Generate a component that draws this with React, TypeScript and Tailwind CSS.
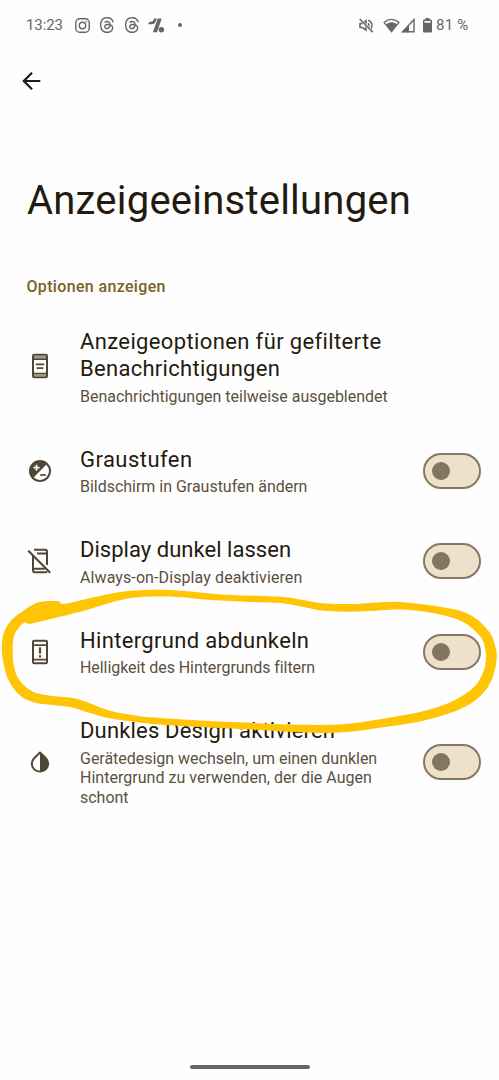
import type { ReactNode } from 'react';
import { SiThreads } from 'react-icons/si';

type Point = [number, number];

interface Option {
  icon: ReactNode;
  title: { text: string; className: string }[];
  summary: { text: string; className: string }[];
  toggle: boolean;
}

// Closed Catmull-Rom curve through the given points
function smoothPath(points: Point[]) {
  const n = points.length;
  let d = `M${points[0][0]} ${points[0][1]}`;
  for (let i = 0; i < n; i++) {
    const p0 = points[(i - 1 + n) % n];
    const p1 = points[i];
    const p2 = points[(i + 1) % n];
    const p3 = points[(i + 2) % n];
    d += `C${p1[0] + (p2[0] - p0[0]) / 6} ${p1[1] + (p2[1] - p0[1]) / 6} ${p2[0] - (p3[0] - p1[0]) / 6} ${p2[1] - (p3[1] - p1[1]) / 6} ${p2[0]} ${p2[1]}`;
  }
  return d + 'Z';
}

const markerOuter: Point[] = [
  [23, 611], [34, 604], [41, 601.8], [50, 601], [59, 601.4], [63, 604], [80, 600.5], [95, 597], [120, 592],
  [140, 590.2], [158, 589.7], [175, 590.3], [200, 592.5], [225, 594.7], [250, 595.7], [283, 597], [300, 599.5],
  [320, 603], [340, 604], [360, 603.8], [380, 602.3], [400, 602], [425, 604.5], [450, 608.5], [465, 612.5],
  [478, 620], [490, 633], [495, 645], [496.7, 657], [493.5, 675], [485, 691], [470, 704], [450, 713], [420, 721.5],
  [385, 727], [350, 731.8], [320, 733], [290, 731.8], [250, 729.5], [200, 727], [150, 723.7], [110, 718.3],
  [90, 713], [70, 707], [50, 704.7], [35, 702.7], [20, 695.5], [8, 679], [2.3, 656], [2.3, 640], [5, 630], [12, 619.5],
];

const markerInner: Point[] = [
  [24.5, 622.6], [29, 624], [34, 623], [60, 616.7], [85, 610.5], [105, 604.2], [122, 599.7], [140, 597], [160, 596.4],
  [180, 597], [210, 600], [250, 602], [280, 603], [300, 606.3], [320, 610.3], [345, 611.8], [370, 611], [390, 609.7],
  [410, 610], [430, 612.5], [450, 617], [465, 623], [477, 633], [483, 641], [486, 655], [484, 670], [476, 685],
  [462, 696], [445, 704.5], [420, 712], [390, 717.5], [355, 723], [330, 724.8], [290, 724.6], [250, 722.8],
  [200, 720.5], [150, 717.3], [133, 715], [110, 710.7], [83, 700.7], [67, 697.3], [50, 695.7], [33, 691.7], [20, 681],
  [14, 667], [12.7, 650], [14, 636], [19, 627.5],
];

function PhoneIcon({ children }: { children: ReactNode }) {
  return (
    <svg width="26" height="26" viewBox="0 0 26 26" fill="none" stroke="#4f4636" strokeWidth="2">
      <rect x="6" y="1.7" width="14" height="22.6" rx="1.2" />
      <path d="M6 6.2h14M6 20.6h14" strokeWidth="1.7" />
      {children}
    </svg>
  );
}

const textPhone = (
  <PhoneIcon>
    <path d="M7 4h12M7 22.3h12" stroke="#a09888" strokeWidth="1.8" />
    <path d="M8.8 11.3h8.4M9.8 15.2h6.4" strokeWidth="1.7" />
  </PhoneIcon>
);

const alertPhone = (
  <PhoneIcon>
    <path d="M13 8.3v6.2M13 16.3v2.1" strokeWidth="2.2" />
  </PhoneIcon>
);

const grayscaleIcon = (
  <svg width="26" height="26" viewBox="0 0 26 26" fill="none">
    <circle cx="13" cy="13" r="10" stroke="#4f4636" strokeWidth="2" />
    <path d="M20.4 5.6 5.6 20.4A10.5 10.5 0 0 1 20.4 5.6Z" fill="#4f4636" />
    <path d="M9.5 6.7v6M6.5 9.7h6" stroke="#fff" strokeWidth="1.7" />
    <path d="M13.2 17h5.6" stroke="#4f4636" strokeWidth="1.7" />
  </svg>
);

const phoneOffIcon = (
  <svg width="26" height="26" viewBox="0 0 26 26" fill="none" stroke="#4f4636" strokeWidth="2">
    <path d="M7 1.8h11.6a1.4 1.4 0 0 1 1.4 1.4V17M10 5.4h10M6 7.5v15.3a1.4 1.4 0 0 0 1.4 1.4h11.4a1.4 1.4 0 0 0 1.2-.8M6 20.7h11.8" />
    <path d="M1.3 2.8 23.2 24.7" strokeWidth="2.1" />
  </svg>
);

const dropIcon = (
  <svg width="26" height="26" viewBox="0 0 26 26" fill="none">
    <path d="M13 3.5 7.1 9.2a8.1 8.1 0 0 0-2.3 5.6C4.8 19.3 8.5 22.6 13 22.6s8.2-3.3 8.2-7.8a8.1 8.1 0 0 0-2.3-5.6Z" stroke="#4f4636" strokeWidth="2" strokeLinejoin="round" />
    <path d="M13 3.5 18.9 9.2a8.1 8.1 0 0 1 2.3 5.6c0 4.5-3.7 7.8-8.2 7.8Z" fill="#4f4636" />
  </svg>
);

const options: Option[] = [
  {
    icon: textPhone,
    title: [
      { text: 'Anzeigeoptionen für gefilterte', className: 'tracking-[0.37px]' },
      { text: 'Benachrichtigungen', className: 'tracking-[0.29px]' },
    ],
    summary: [{ text: 'Benachrichtigungen teilweise ausgeblendet', className: 'tracking-[-0.02px]' }],
    toggle: false,
  },
  {
    icon: grayscaleIcon,
    title: [{ text: 'Graustufen', className: 'tracking-[0.46px]' }],
    summary: [{ text: 'Bildschirm in Graustufen ändern', className: 'tracking-[-0.02px]' }],
    toggle: true,
  },
  {
    icon: phoneOffIcon,
    title: [{ text: 'Display dunkel lassen', className: 'tracking-[0.03px]' }],
    summary: [{ text: 'Always-on-Display deaktivieren', className: 'tracking-[0.1px]' }],
    toggle: true,
  },
  {
    icon: alertPhone,
    title: [{ text: 'Hintergrund abdunkeln', className: 'tracking-[0.33px]' }],
    summary: [{ text: 'Helligkeit des Hintergrunds filtern', className: 'tracking-[-0.07px]' }],
    toggle: true,
  },
  {
    icon: dropIcon,
    title: [{ text: 'Dunkles Design aktivieren', className: 'tracking-[0.17px]' }],
    summary: [
      { text: 'Gerätedesign wechseln, um einen dunklen', className: 'tracking-[-0.02px]' },
      { text: 'Hintergrund zu verwenden, der die Augen', className: 'tracking-[0.02px]' },
      { text: 'schont', className: 'tracking-[-0.02px]' },
    ],
    toggle: true,
  },
];

function StatusBar() {
  return (
    <div className="flex h-[50px] items-center justify-between pl-[26px] pr-[31px] text-[#666]">
      <div className="flex items-center">
        <span className="w-[49px] whitespace-nowrap pt-px text-[15px] tracking-[-0.1px]">13:23</span>
        <svg width="15" height="15" viewBox="0 0 15 15" fill="none" stroke="#666" strokeWidth="1.4">
          <rect x="0.8" y="0.8" width="13.4" height="13.4" rx="3.8" />
          <circle cx="7.5" cy="7.5" r="3.2" />
          <circle cx="11.4" cy="3.6" r="0.5" fill="#666" strokeWidth="0.6" />
        </svg>
        <SiThreads className="ml-[9px] size-4" />
        <SiThreads className="ml-[9px] size-4" />
        <svg className="ml-2" width="17" height="15" viewBox="0 0 17 15" fill="#666">
          <path d="M0 6.2C0.5 4.6 1.8 3.8 3.6 3.5 4.9 3.3 5.2 2.6 5.5 1.7 5.8 0.9 6.3 0.5 7.2 0.5h1.8L7.2 4.3C6.5 5.7 5.4 6.2 3.7 6.2Z" />
          <path d="M9.8 0.5h3.9L9 14.3H4.9Z" />
          <circle cx="13.4" cy="11.7" r="2.7" />
        </svg>
        <span className="ml-[13px] size-1 rounded-full bg-[#666]" />
      </div>
      <div className="flex items-center">
        <svg width="15" height="15" viewBox="0 0 15 15" fill="none" stroke="#666" strokeWidth="1.5">
          <path d="M1 5.4h2.6L7 2.8v9.4L3.6 9.6H1ZM9.2 5.2q1.6 2.2 0 4.6M9.2 2.2a5.5 5.5 0 0 1 2.8 8.6" />
          <path d="M0.7 1 13.8 14.1" stroke="#fff" strokeWidth="2.4" />
          <path d="M0.7 1 13.8 14.1" />
        </svg>
        <svg className="ml-[9px]" width="17" height="15" viewBox="0 0 17 15" fill="none">
          <path d="M1 4.4Q8.5-1.8 16 4.4L8.5 13.8Z" stroke="#666" strokeWidth="1.3" />
          <path d="M3 6.2Q8.5 2.4 14 6.2L8.5 13.8Z" fill="#666" />
        </svg>
        <svg className="ml-[1px]" width="14" height="15" viewBox="0 0 14 15" fill="none">
          <path d="M1.6 13.7H13V1.5Z" stroke="#666" strokeWidth="1.4" />
          <path d="M0.6 14.2H8V6.7Z" fill="#666" />
        </svg>
        <svg className="ml-2" width="9" height="15" viewBox="0 0 9 15" fill="#666" fillRule="evenodd">
          <path d="M2.5 0h4v1.6h1.4q1.1 0 1.1 1.1v10.7q0 1.1-1.1 1.1H1.1Q0 14.5 0 13.4V2.7Q0 1.6 1.1 1.6h1.4ZM1.4 3v1.7h6.2V3Z" />
        </svg>
        <span className="ml-1 w-[32px] whitespace-nowrap pt-px text-[15px] tracking-[0.2px]">81 %</span>
      </div>
    </div>
  );
}

function Toggle() {
  return (
    <button className="flex h-9 w-[58px] shrink-0 items-center rounded-full border-2 border-[#857762] bg-[#ede1cc] pl-[7px]">
      <span className="size-[18px] rounded-full bg-[#837560]" />
    </button>
  );
}

function OptionRow({ option }: { option: Option }) {
  return (
    <div className="flex items-center pl-[27px] pr-[18px]">
      <div className="w-[53px] shrink-0">{option.icon}</div>
      <div className="flex-1 whitespace-nowrap pb-[19.25px] pt-[20.25px]">
        {option.title.map((line) => (
          <p key={line.text} className={`text-[22px] leading-[27.5px] text-[#231b0f] ${line.className}`}>
            {line.text}
          </p>
        ))}
        <div className="pt-1">
          {option.summary.map((line) => (
            <p key={line.text} className={`text-[16px] leading-[19.5px] text-[#5b503f] ${line.className}`}>
              {line.text}
            </p>
          ))}
        </div>
      </div>
      {option.toggle && <Toggle />}
    </div>
  );
}

export default function App() {
  return (
    <div className="relative flex h-[1080px] w-[499px] flex-col overflow-hidden bg-[#fefefe] font-['Roboto','Liberation_Sans',sans-serif]">
      <StatusBar />
      <div className="flex h-[62px] items-center pl-[22px]">
        <svg width="20" height="20" viewBox="0 0 20 20" fill="none" stroke="#1f1b16" strokeWidth="2.2">
          <path d="M18.3 10H2.5M10 1.7 1.8 10l8.2 8.3" />
        </svg>
      </div>
      <h1 className="mt-[65px] pl-[27px] text-[40px] leading-[48px] tracking-[0.22px] text-[#231b0f]">Anzeigeeinstellungen</h1>
      <h2 className="mt-[52px] pl-[26.5px] text-[16px] font-medium leading-[20px] tracking-[0.34px] text-[#7b6128]">Optionen anzeigen</h2>
      <div className="mt-[10.4px] flex flex-col">
        {options.map((option) => (
          <OptionRow key={option.title[0].text} option={option} />
        ))}
      </div>
      <div className="mt-auto flex justify-center pb-[11px]">
        <div className="h-1 w-[120px] rounded-full bg-[#666865]" />
      </div>

      {/* Hand-drawn marker around the highlighted option */}
      <svg className="pointer-events-none absolute inset-0" width="499" height="1080" viewBox="0 0 499 1080">
        <path d={smoothPath(markerOuter) + smoothPath(markerInner)} fill="#ffc403" fillRule="evenodd" />
      </svg>
    </div>
  );
}
